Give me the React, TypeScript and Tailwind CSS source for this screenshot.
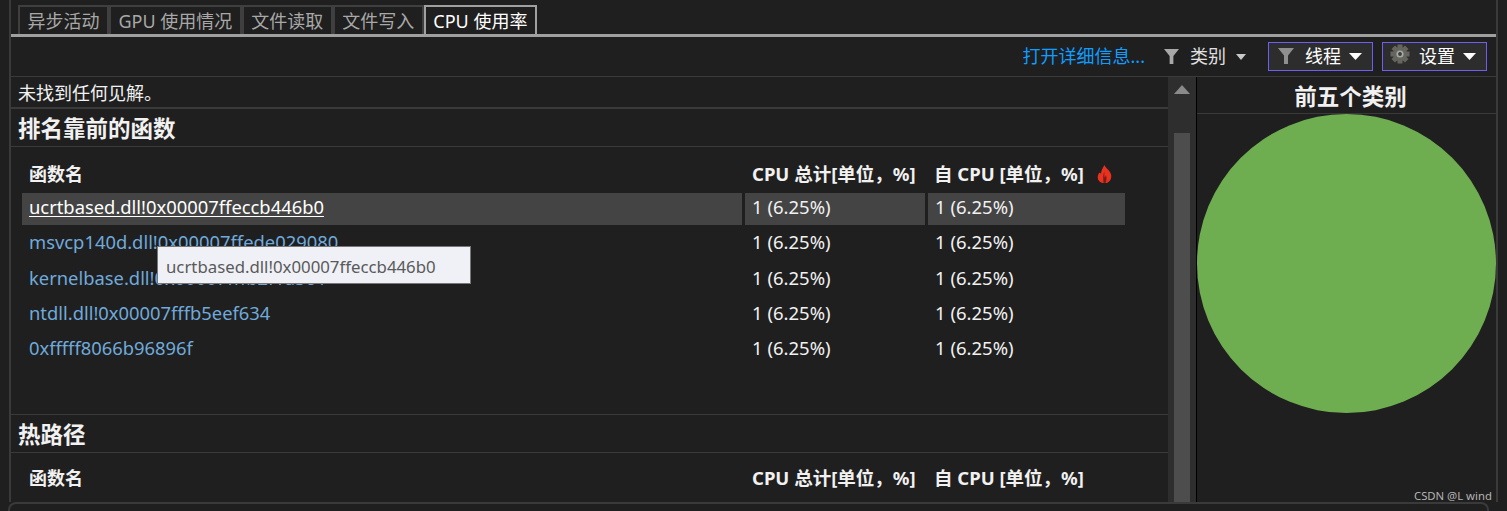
import React from 'react';

const functions = [
  'ucrtbased.dll!0x00007ffeccb446b0',
  'msvcp140d.dll!0x00007ffede029080',
  'kernelbase.dll!0x00007fffb2f1a3c4',
  'ntdll.dll!0x00007fffb5eef634',
  '0xfffff8066b96896f',
];

const tabs = ['异步活动', 'GPU 使用情况', '文件读取', '文件写入'];

const Funnel = ({ className }: { className: string }) => (
  <svg viewBox="0 0 16 16" className={className}>
    <path d="M0 0H16L10 7.5V16H6V7.5Z" fill="currentColor" />
  </svg>
);

const Caret = ({ className }: { className: string }) => (
  <svg viewBox="0 0 10 6" className={className} preserveAspectRatio="none">
    <path d="M0 0H10L5 6Z" fill="currentColor" />
  </svg>
);

const Gear = () => (
  <svg viewBox="0 0 20 20" className="w-[20px] h-[20px] mr-[9px] mb-[5px]">
    {[0, 45, 90, 135].map((a) => (
      <rect key={a} x="7.5" y="0.5" width="5" height="19" fill="#66665f" transform={`rotate(${a} 10 10)`} />
    ))}
    <circle cx="10" cy="10" r="7" fill="#66665f" />
    <circle cx="10" cy="10" r="3.6" fill="#a3aaa8" />
    <circle cx="10" cy="10" r="1.9" fill="#3c3c38" />
  </svg>
);

const Flame = () => (
  <svg viewBox="0 0 16 18" className="w-[17px] h-[18px]">
    <path
      d="M8 0C9 3 12 4 14 8C16 12 14 17 10 18H6C2 17 0 13 2 9C3 7 4 8 4.5 9C4.5 6 6 3 8 0Z"
      fill="#e8321f"
    />
    <path d="M8 6C6.5 9 6.5 13 7 18H9C10.5 15 10 12 9.5 10C9 11.5 8.5 12 8 12.5C7.8 10.5 7.7 8.5 8 6Z" fill="#7a1c14" />
  </svg>
);

const TableHead = ({ flame }: { flame?: boolean }) => (
  <div className="grid grid-cols-[720px_180px_197px] gap-[3px] ml-[11px] font-bold text-[18.5px] leading-[24px] text-[#f1f1f1]">
    <div className="pl-[7px] text-[18px]">函数名</div>
    <div className="pl-[7px] whitespace-nowrap">CPU 总计[单位，%]</div>
    <div className="pl-[6px] flex items-center gap-[12px] whitespace-nowrap">
      自 CPU [单位，%]
      {flame && <Flame />}
    </div>
  </div>
);

export default function App() {
  return (
    <div className="relative w-[1507px] h-[511px] overflow-hidden bg-[#1f1f1f] text-[#f1f1f1] font-['Noto_Sans','Noto_Sans_CJK_SC',sans-serif]">
      <div className="h-[502px] ml-[9px] mr-[9px] border-x-2 border-[#3a3a3a] flex flex-col">
        {/* Tabs */}
        <div className="pt-[5px] pl-[7px] h-[37px] border-b-[3px] border-[#a0a0a0] flex shrink-0">
          {tabs.map((t) => (
            <div
              key={t}
              className="px-[7.5px] h-[29px] border-2 border-b-0 border-[#3f3f3f] text-[18px] leading-[28px] text-[#a8a8a8] whitespace-nowrap"
            >
              {t}
            </div>
          ))}
          <div className="px-[7.5px] h-[29px] border-2 border-b-0 border-[#a0a0a0] text-[18px] leading-[28px] text-white whitespace-nowrap">
            CPU 使用率
          </div>
        </div>

        {/* Toolbar */}
        <div className="h-[40px] shrink-0 border-b border-[#3a3a3a] flex items-center justify-end pr-[9px] text-[18px]">
          <span className="text-[#0f9dff] mr-[19px]">打开详细信息...</span>
          <Funnel className="w-[15px] h-[15px] text-[#a8a8a8] mr-[11px]" />
          <span className="text-[#e0e0e0] mr-[10px]">类别</span>
          <Caret className="w-[10px] h-[6px] text-[#c8c8c8] mr-[22px]" />
          <div className="w-[105px] h-[29px] border border-[#6d5ff0] bg-[#2d2d2d] flex items-center pl-[9px] mr-[9px]">
            <Funnel className="w-[16px] h-[16px] text-[#8f8f8f] mr-[11px] mb-[2px]" />
            <span className="mr-[8px] text-white">线程</span>
            <Caret className="w-[13px] h-[7px] text-white" />
          </div>
          <div className="w-[105px] h-[29px] border border-[#6d5ff0] bg-[#2d2d2d] flex items-center pl-[7px]">
            <Gear />
            <span className="mr-[8px] text-white">设置</span>
            <Caret className="w-[13px] h-[7px] text-white" />
          </div>
        </div>

        <div className="flex-1 min-h-0 flex">
          {/* Left content */}
          <div className="w-[1157px] shrink-0 flex flex-col">
            <div className="h-[32px] shrink-0 pl-[7px] text-[18px] leading-[33px] border-b-2 border-[#3a3a3a]">
              未找到任何见解。
            </div>
            <div className="h-[38px] shrink-0 pl-[7px] text-[22.5px] leading-[40px] font-bold border-b border-[#3a3a3a]">
              排名靠前的函数
            </div>
            <div className="pt-[15px] h-[268px] shrink-0 border-b border-[#3a3a3a]">
              <TableHead flame />
              <div className="mt-[7px] flex flex-col gap-[3.25px] text-[18.5px] leading-[28px]">
                {functions.map((fn, i) => (
                  <div
                    key={fn}
                    className="grid grid-cols-[720px_180px_197px] gap-[3px] ml-[11px] h-[32px]"
                  >
                    <div
                      className={
                        i === 0
                          ? 'pl-[7px] text-[18.37px] bg-[#444444] text-white underline underline-offset-2'
                          : 'pl-[7px] text-[18.37px] text-[#70aadb]'
                      }
                    >
                      {fn}
                    </div>
                    <div className={i === 0 ? 'pl-[7px] bg-[#444444]' : 'pl-[7px]'}>1 (6.25%)</div>
                    <div className={i === 0 ? 'pl-[7px] bg-[#444444]' : 'pl-[7px]'}>1 (6.25%)</div>
                  </div>
                ))}
              </div>
            </div>
            <div className="h-[38px] shrink-0 pl-[7px] text-[22.5px] leading-[40px] font-bold border-b border-[#3a3a3a]">
              热路径
            </div>
            <div className="pt-[13px]">
              <TableHead />
            </div>
          </div>

          {/* Scrollbar */}
          <div className="w-[28px] shrink-0 bg-[#2e2e2e] flex flex-col items-center pt-[8px]">
            <Caret className="w-[16px] h-[9px] rotate-180 text-[#8a8a8a]" />
            <div className="mt-[39px] w-[16px] flex-1 bg-[#4d4d4d]" />
          </div>

          {/* Pie panel */}
          <div className="flex-1 min-w-0 border-l border-black flex flex-col">
            <div className="h-[37px] shrink-0 pl-[8px] border-b border-[#3a3a3a] text-center text-[22.5px] leading-[39px] font-bold">
              前五个类别
            </div>
            <div className="w-[299px] h-[299px] shrink-0 rounded-full bg-[#6eae50]" />
          </div>
        </div>
      </div>

      {/* Bottom panel edge */}
      <div className="h-[12px] ml-[8px] mr-[18px] border-t-2 border-x-2 border-[#3a3a3a] rounded-t-[8px]" />

      {/* Tooltip */}
      <div className="absolute left-[157px] top-[246px] w-[314px] h-[38px] pl-[8px] bg-[#f0f1f7] border border-[#777777] text-[#5a5a5a] text-[16.8px] leading-[40px] whitespace-nowrap">
        ucrtbased.dll!0x00007ffeccb446b0
      </div>

      {/* Watermark */}
      <div className="absolute left-[1414px] top-[489px] text-[11.3px] leading-[14px] text-[#b4b4b4] whitespace-nowrap">
        CSDN @L wind
      </div>
    </div>
  );
}
